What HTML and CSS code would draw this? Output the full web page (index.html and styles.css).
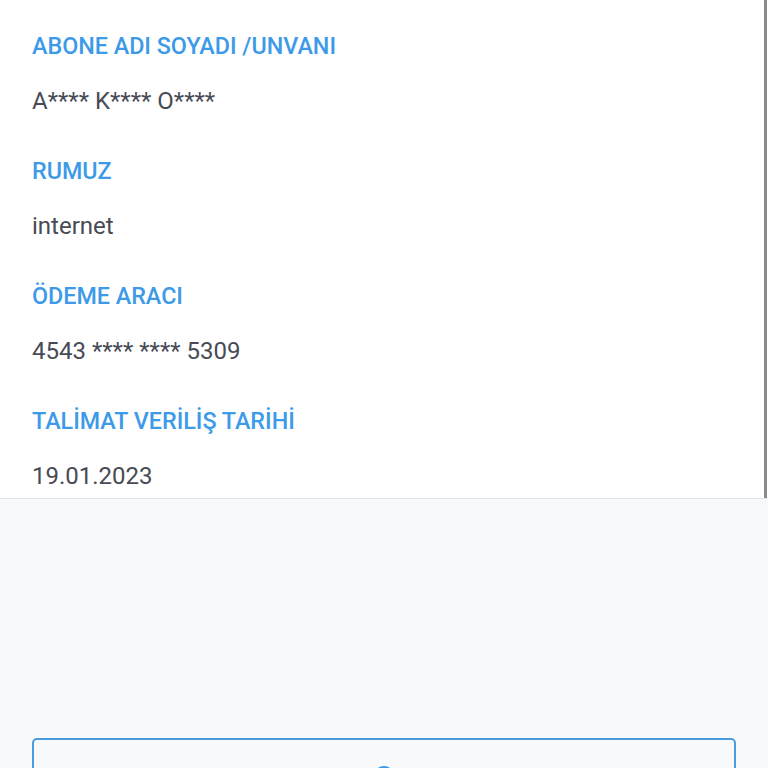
FILE: index.html
```html
<!DOCTYPE html>
<html lang="tr">
<head>
    <meta charset="UTF-8">
    <meta name="viewport" content="width=device-width, initial-scale=1.0">
    <title>Talimat Detayı</title>
    <link rel="stylesheet" href="styles.css">
</head>
<body>
    <div class="page">
        <div class="card">
            <div class="field">
                <div class="label">ABONE ADI SOYADI /UNVANI</div>
                <div class="value">A**** K**** O****</div>
            </div>
            <div class="field">
                <div class="label">RUMUZ</div>
                <div class="value">internet</div>
            </div>
            <div class="field">
                <div class="label">ÖDEME ARACI</div>
                <div class="value">4543 **** **** 5309</div>
            </div>
            <div class="field">
                <div class="label">TALİMAT VERİLİŞ TARİHİ</div>
                <div class="value">19.01.2023</div>
            </div>
            <!-- kaydırma çubuğu -->
            <div class="scrollbar"></div>
        </div>
        <div class="bottom">
            <button class="btn" type="button">
                <svg width="24" height="24" viewBox="0 0 24 24" fill="none" stroke="#3d9ae8" stroke-width="2.2">
                    <circle cx="12" cy="12" r="9"/>
                    <path d="M12 8v8M8 12h8"/>
                </svg>
            </button>
        </div>
    </div>
</body>
</html>
```

FILE: styles.css
```css
* {
    box-sizing: border-box;
}
body {
    margin: 0;
    background-color: #f8f9fb;
    font-family: Roboto, "Noto Sans", sans-serif;
}
.page {
    height: 768px;
    overflow: hidden;
}
.card {
    position: relative;
    background-color: #ffffff;
    border-bottom: 1px solid #e4e6ea;
    padding: 31px 32px 7px 32px;
    display: flex;
    flex-direction: column;
    gap: 40px;
}
.field {
    display: flex;
    flex-direction: column;
    gap: 25px;
}
.label {
    font-size: 23.3px;
    line-height: 30px;
    font-weight: 500;
    color: #3d9ae8;
}
.value {
    font-size: 24px;
    line-height: 30px;
    color: #474b55;
}
.scrollbar {
    position: absolute;
    top: 0;
    right: 1px;
    width: 3px;
    height: 100%;
    background-color: #8a8a8a;
}
.bottom {
    padding: 239px 32px 0 32px;
}
.btn {
    width: 100%;
    height: 64px;
    background-color: #f8f9fb;
    border: 2px solid #4a9be0;
    border-radius: 5px;
    display: flex;
    justify-content: center;
    padding-top: 24px;
}
```
